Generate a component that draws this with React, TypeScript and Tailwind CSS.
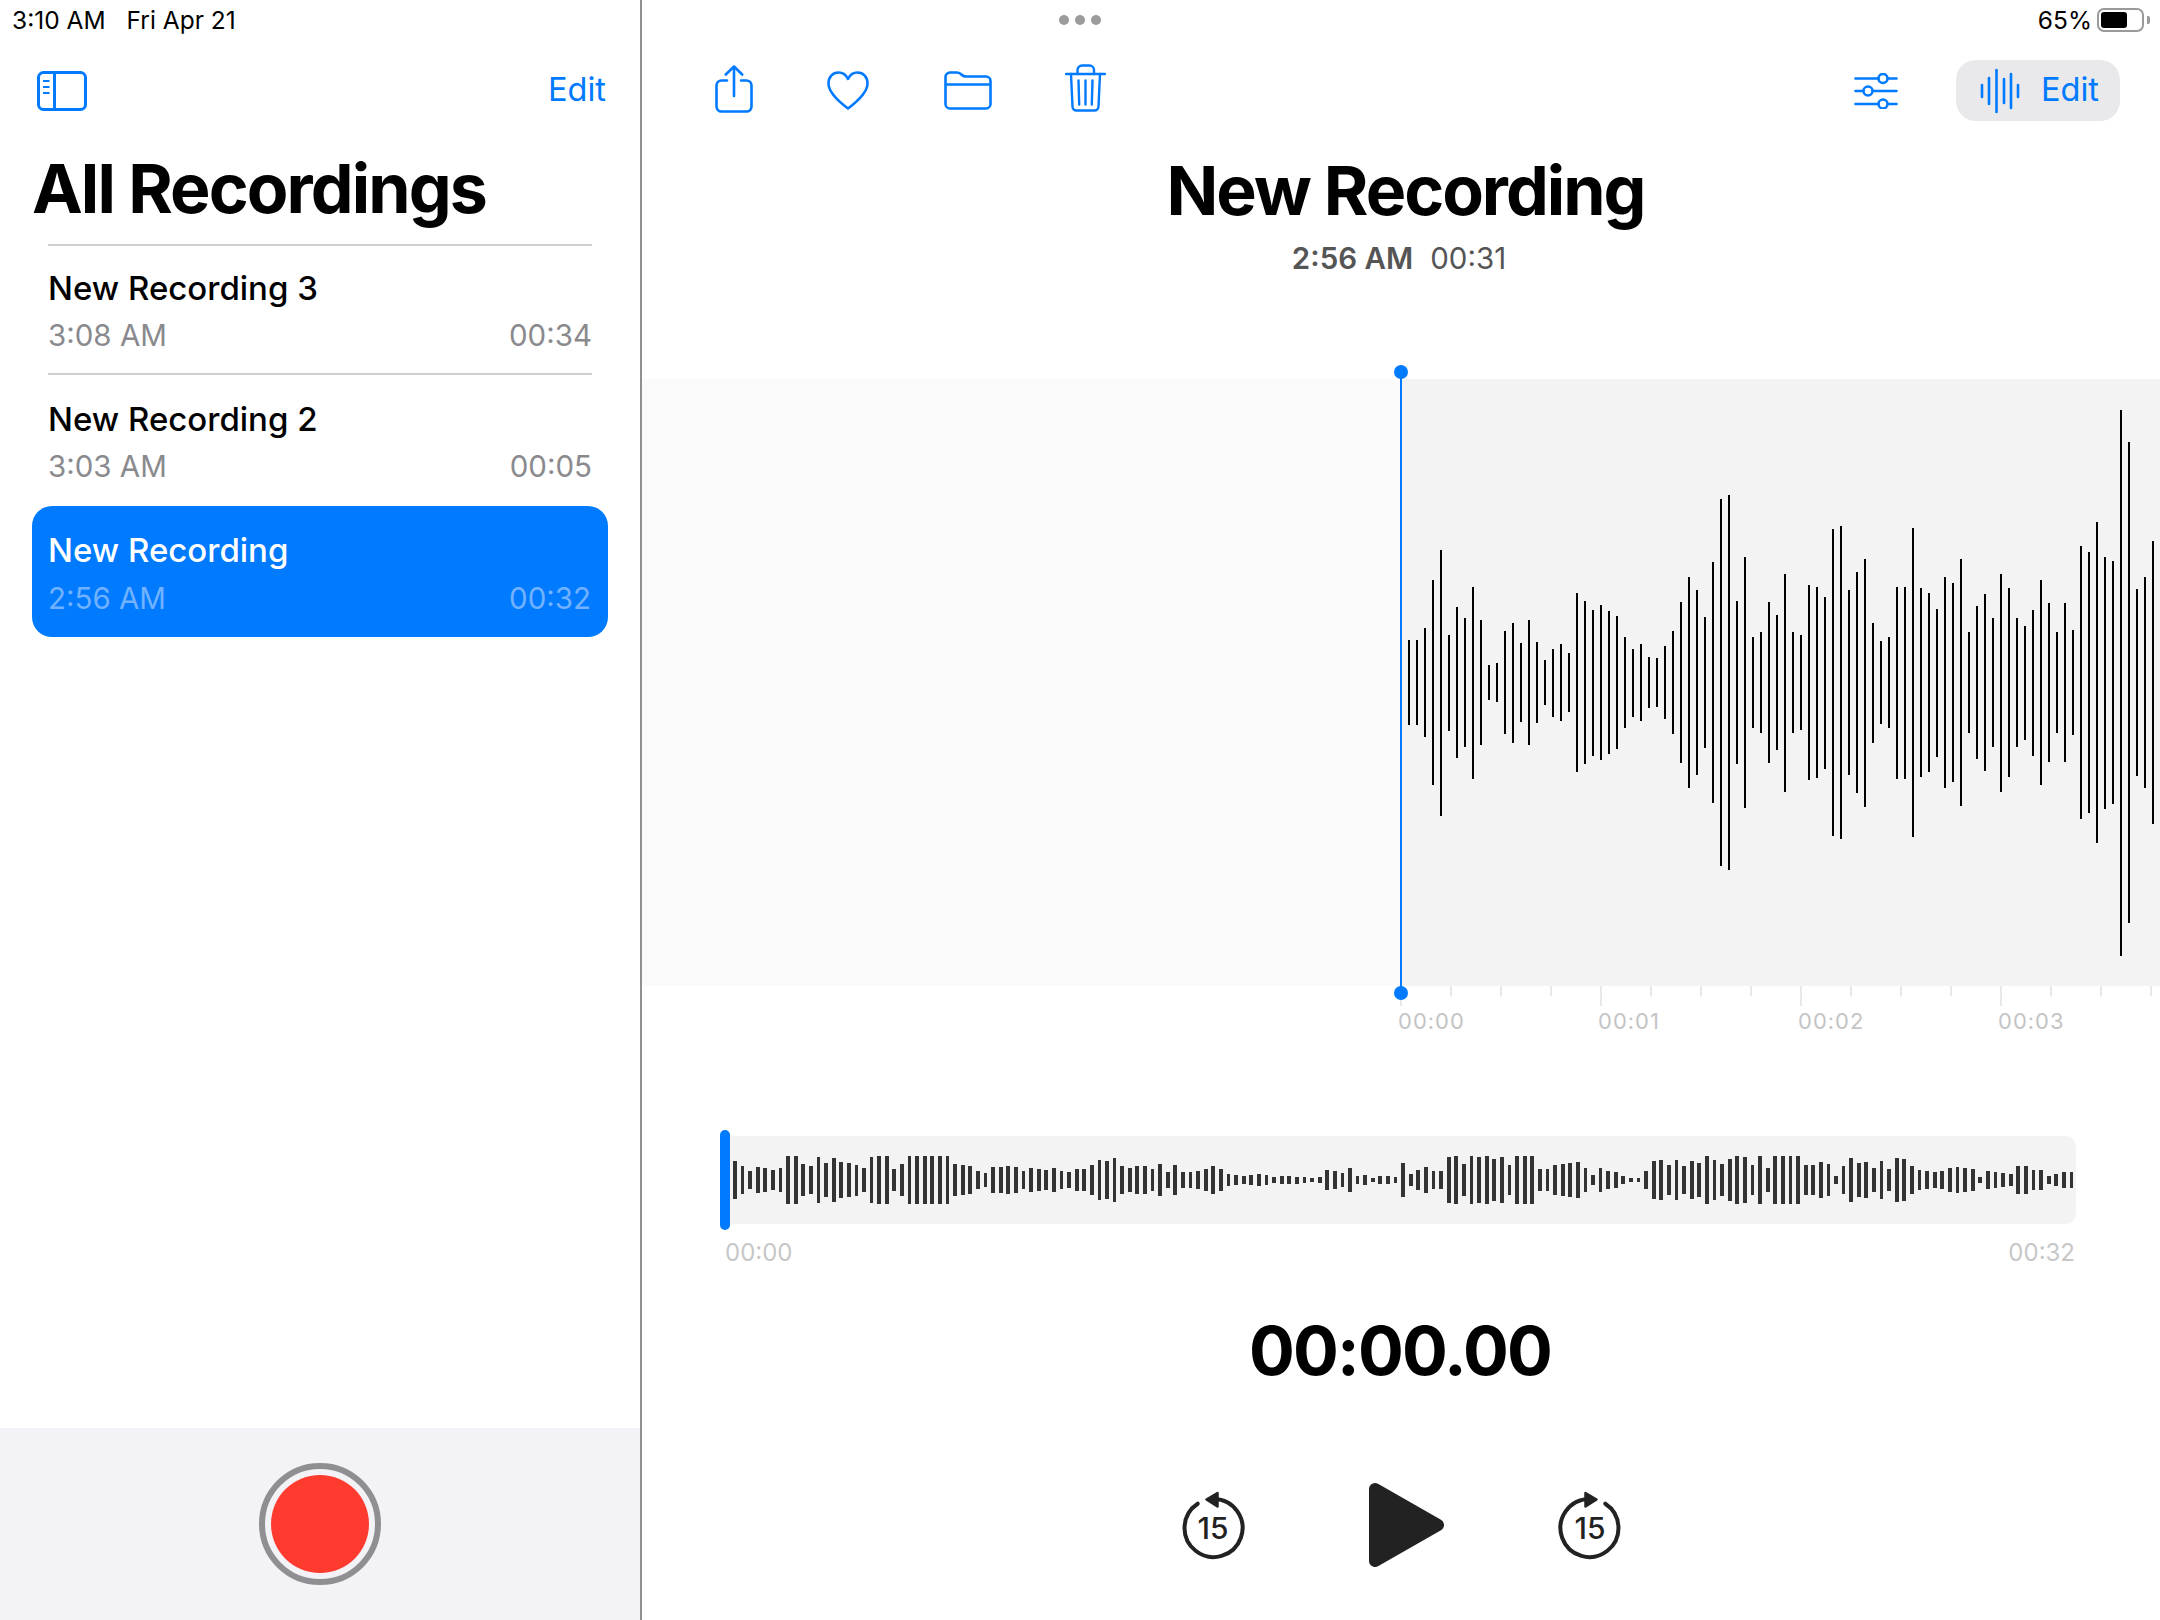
const BLUE = '#007aff';

const recordings = [
  { name: 'New Recording 3', time: '3:08 AM', length: '00:34', selected: false },
  { name: 'New Recording 2', time: '3:03 AM', length: '00:05', selected: false },
  { name: 'New Recording', time: '2:56 AM', length: '00:32', selected: true },
];

// bar heights in px, read off the reference
const bigWave = [
  85, 85, 109, 205, 266, 96, 151, 129, 192, 125, 35, 39, 103, 120, 79, 125, 81, 45, 68, 77, 59, 179, 163, 146, 155, 143, 133,
  91, 68, 77, 51, 49, 73, 103, 161, 211, 185, 131, 241, 367, 375, 163, 251, 91, 101, 161, 135, 218, 101, 95, 195, 191, 172,
  307, 313, 185, 221, 248, 120, 83, 91, 192, 192, 309, 189, 179, 148, 211, 199, 247, 101, 153, 177, 129, 218, 189, 129, 114,
  146, 205, 159, 101, 159, 105, 273, 261, 321, 252, 243, 546, 481, 187, 211, 283,
];

const miniWave = [
  38, 28, 18, 26, 24, 20, 24, 48, 48, 32, 28, 46, 34, 44, 36, 34, 31, 24, 46, 48, 48, 22, 32, 48, 48, 48, 48, 48, 48, 32,
  30, 28, 18, 14, 26, 26, 28, 26, 18, 24, 22, 20, 24, 18, 16, 22, 22, 30, 40, 38, 44, 28, 24, 28, 28, 22, 32, 16, 30, 16,
  16, 18, 22, 28, 22, 12, 10, 8, 10, 12, 10, 6, 8, 8, 7, 6, 4, 6, 20, 18, 14, 24, 8, 10, 4, 8, 8, 6, 34, 12, 20, 26, 18,
  18, 46, 48, 32, 48, 46, 48, 42, 46, 30, 48, 48, 48, 22, 22, 30, 32, 34, 36, 24, 10, 24, 18, 16, 8, 4, 4, 18, 38, 40, 30,
  40, 28, 38, 34, 48, 40, 32, 42, 48, 46, 30, 48, 24, 48, 48, 48, 48, 30, 30, 36, 32, 8, 28, 44, 34, 36, 24, 38, 22, 44,
  42, 28, 20, 18, 16, 18, 24, 26, 24, 22, 6, 18, 16, 14, 12, 28, 28, 20, 20, 8, 12, 16, 16,
];

const ticks = Array.from({ length: 16 }, (_, i) => i);

function SidebarIcon() {
  return (
    <svg width="50" height="40" viewBox="0 0 50 40" fill="none" stroke={BLUE} strokeWidth="3">
      <rect x="1.5" y="1.5" width="47" height="37" rx="5" />
      <path d="M17.5 1.5V38.5" />
      <path d="M6 10H12.5M6 16H12.5M6 22H12.5" strokeWidth="2" />
    </svg>
  );
}

function ShareIcon() {
  return (
    <svg width="38" height="48" viewBox="0 0 38 48" fill="none" stroke={BLUE} strokeWidth="2.6" strokeLinecap="round" strokeLinejoin="round">
      <path d="M12 15.5H6.5a5 5 0 0 0-5 5V41.500a5 5 0 0 0 5 5H31.500a5 5 0 0 0 5-5V20.500a5 5 0 0 0-5-5H26" />
      <path d="M19 2V31" />
      <path d="M10.800 9.500L19 1.500L27.200 9.500" />
    </svg>
  );
}

function HeartIcon() {
  return (
    <svg width="42" height="39" viewBox="0 0 42 39" fill="none" stroke={BLUE} strokeWidth="2.6" strokeLinejoin="round">
      <path d="M21 8C19 3.500 15.500 1.500 11.500 1.500C5.500 1.500 1.500 6 1.500 12.500C1.500 21 11 30 21 37.500C31 30 40.500 21 40.500 12.500C40.500 6 36.500 1.500 30.500 1.500C26.500 1.500 23 3.500 21 8Z" />
    </svg>
  );
}

function FolderIcon() {
  return (
    <svg width="48" height="39" viewBox="0 0 48 39" fill="none" stroke={BLUE} strokeWidth="2.6" strokeLinejoin="round">
      <path d="M1.500 13V6a4.500 4.500 0 0 1 4.500-4.500H13c2.500 0 3.500 1 5 2.500c1 1 2 1.500 4 1.500H42a4.500 4.500 0 0 1 4.500 4.500V33a4.500 4.500 0 0 1-4.500 4.500H6a4.500 4.500 0 0 1-4.500-4.500Z" />
      <path d="M1.500 13.500H46.500" />
    </svg>
  );
}

function TrashIcon() {
  return (
    <svg width="41" height="48" viewBox="0 0 41 48" fill="none" stroke={BLUE} strokeWidth="2.4" strokeLinecap="round" strokeLinejoin="round">
      <path d="M1 10H40" />
      <path d="M12.500 10V6a4.500 4.500 0 0 1 4.500-4.500H24.500a4.500 4.500 0 0 1 4.500 4.500V10" />
      <path d="M6 10L7.500 42.500a4 4 0 0 0 4 4H29.500a4 4 0 0 0 4-4L35 10" />
      <path d="M13.500 16.500L14.200 40.500M20.500 16.500V40.500M27.500 16.500L26.800 40.500" />
    </svg>
  );
}

function SlidersIcon() {
  return (
    <svg width="44" height="36" viewBox="0 0 44 36" fill="none" stroke={BLUE} strokeWidth="2.6" strokeLinecap="round">
      <path d="M1.500 5.500H24M34 5.500H42.500M1.500 18H9M19 18H42.500M1.500 31H24M34 31H42.500" />
      <circle cx="29" cy="5.500" r="4.500" />
      <circle cx="14" cy="18" r="4.500" />
      <circle cx="29" cy="31" r="4.500" />
    </svg>
  );
}

function WaveIcon() {
  return (
    <svg width="40" height="46" viewBox="0 0 40 46" fill="none" stroke={BLUE} strokeWidth="2.600" strokeLinecap="round">
      <path d="M2 17V29M9 10V36M16.500 2V44M24 11V35M31 6V40M38 17V29" />
    </svg>
  );
}

function BatteryIcon() {
  return (
    <div className="flex items-center">
      <div className="flex h-[24px] w-[47px] items-center rounded-[7px] border-2 border-[#9a9a9a] pl-[2px]">
        <div className="h-[16px] w-[26px] rounded-[3px] bg-black" />
      </div>
      <div className="ml-[3px] h-[8px] w-[3px] rounded-r-[2px] bg-[#9a9a9a]" />
    </div>
  );
}

function SkipIcon({ forward }: { forward?: boolean }) {
  return (
    <svg width="64" height="72" viewBox="0 0 64 72" fill="none">
      <g transform={forward ? 'matrix(-1 0 0 1 64 0)' : undefined}>
        <path d="M16.700 14.700A29 29 0 1 0 33 10" stroke="#222222" strokeWidth="4" strokeLinecap="round" />
        <path d="M25.500 10.500L36.500 4V17.500Z" fill="#222222" stroke="#222222" strokeWidth="2.500" strokeLinejoin="round" />
      </g>
      <text x="32" y="50" textAnchor="middle" fontFamily="Inter, sans-serif" fontSize="30" fontWeight="500" fill="#222222">
        15
      </text>
    </svg>
  );
}

function PlayIcon() {
  return (
    <svg width="75" height="84" viewBox="0 0 75 84" fill="#222222" stroke="#222222" strokeWidth="12" strokeLinejoin="round">
      <path d="M6 6L69 42L6 78Z" />
    </svg>
  );
}

function RecordingRow({ name, time, length, selected, first }: (typeof recordings)[number] & { first?: boolean }) {
  const box = selected
    ? 'mx-[32px] h-[131px] rounded-[20px] bg-[#007aff] pt-[22px] pr-[17px] pl-[16px]'
    : first
      ? 'mx-[48px] h-[127px] pt-[20px]'
      : 'mx-[48px] h-[131px] pt-[22px]';
  return (
    <div className={box}>
      <div className={selected ? 'text-[33px] leading-[44px] font-medium text-white' : 'text-[33px] leading-[44px] font-medium text-black'}>{name}</div>
      <div className={selected ? 'mt-[4px] flex justify-between text-[29.500px] leading-[44px] text-[#70b2ff]' : 'mt-[3px] flex justify-between text-[29.500px] leading-[44px] text-[#8a8a8e]'}>
        <span>{time}</span>
        <span>{length}</span>
      </div>
    </div>
  );
}

function Sidebar() {
  return (
    <aside className="flex h-[1620px] w-[642px] shrink-0 flex-col border-r-2 border-[#909094]">
      <div className="flex h-[40px] items-center pl-[12px] text-[24.500px] text-black">
        <span>3:10 AM</span>
        <span className="ml-[21px]">Fri Apr 21</span>
      </div>
      <div className="mt-[20px] flex h-[61px] items-center justify-between pr-[34px] pl-[37px]">
        <SidebarIcon />
        <span className="text-[32.500px] text-[#007aff]">Edit</span>
      </div>
      <h1 className="mt-[26px] h-[97px] pl-[32px] text-[68px] leading-[82px] font-bold tracking-[-1.900px] text-black">All Recordings</h1>
      <div className="mx-[48px] h-[2px] bg-[#d0d0d2]" />
      <RecordingRow {...recordings[0]} first />
      <div className="mx-[48px] h-[2px] bg-[#d0d0d2]" />
      <RecordingRow {...recordings[1]} />
      <RecordingRow {...recordings[2]} />
      <div className="mt-auto flex h-[192px] items-center justify-center bg-[#f2f2f7]">
        <div className="flex h-[122px] w-[122px] items-center justify-center rounded-full border-[6px] border-[#8e8e93]">
          <div className="h-[98px] w-[98px] rounded-full bg-[#ff3b30]" />
        </div>
      </div>
    </aside>
  );
}

function BigWaveform() {
  return (
    <div className="relative mt-[99px]">
      <div className="flex h-[607px] overflow-hidden">
        <div className="w-[759px] shrink-0 bg-[#fafafa]" />
        <div className="flex flex-1 items-center gap-[6px] bg-[#f3f3f3] pl-[7px]">
          {bigWave.map((h, i) => (
            <div key={i} className="w-[2px] shrink-0 bg-black" style={{ height: h }} />
          ))}
        </div>
      </div>
      {/* playhead sits over the wave */}
      <div className="absolute -top-[14px] left-[752px] h-[635px] w-[14px]">
        <div className="absolute top-0 left-0 h-[14px] w-[14px] rounded-full bg-[#007aff]" />
        <div className="absolute top-[4px] left-[6px] h-[618px] w-[2px] bg-[#007aff]" />
        <div className="absolute top-[621px] left-0 h-[14px] w-[14px] rounded-full bg-[#007aff]" />
      </div>
      <div className="ml-[758px] flex h-[22px] gap-[48px]">
        {ticks.map((i) => (
          <div key={i} className={i % 4 === 0 ? 'h-[20px] w-[2px] shrink-0 bg-[#e8e8e8]' : 'h-[10px] w-[2px] shrink-0 bg-[#e8e8e8]'} />
        ))}
      </div>
      <div className="ml-[756px] flex h-[26px] text-[22px] leading-[26px] tracking-[1px] text-[#c4c4c4]">
        <span className="w-[200px] shrink-0">00:00</span>
        <span className="w-[200px] shrink-0">00:01</span>
        <span className="w-[200px] shrink-0">00:02</span>
        <span className="w-[200px] shrink-0">00:03</span>
      </div>
    </div>
  );
}

function MiniWaveform() {
  return (
    <div className="mt-[102px] pr-[84px] pl-[78px]">
      <div className="relative">
        <div className="flex h-[88px] items-center justify-between rounded-[10px] bg-[#f3f3f3] pl-[13px]">
          {miniWave.map((h, i) => (
            <div key={i} className="w-[3.800px] shrink-0 bg-[#333333]" style={{ height: h }} />
          ))}
        </div>
        <div className="absolute -top-[6px] left-0 h-[100px] w-[10px] rounded-full bg-[#007aff]" />
      </div>
      <div className="mt-[13px] flex justify-between pr-[1px] pl-[5px] text-[24px] leading-[32px] text-[#c7c7c7]">
        <span>00:00</span>
        <span>00:32</span>
      </div>
    </div>
  );
}

function Detail() {
  return (
    <main className="flex h-[1620px] min-w-0 flex-1 flex-col overflow-hidden">
      <div className="flex h-[40px] items-center pr-[10px]">
        <div className="ml-[417px] flex gap-[6px]">
          <div className="h-[10px] w-[10px] rounded-full bg-[#9b9b9b]" />
          <div className="h-[10px] w-[10px] rounded-full bg-[#9b9b9b]" />
          <div className="h-[10px] w-[10px] rounded-full bg-[#9b9b9b]" />
        </div>
        <div className="ml-auto flex items-center gap-[5px]">
          <span className="text-[24.500px] text-black">65%</span>
          <BatteryIcon />
        </div>
      </div>
      <div className="mt-[20px] flex h-[61px] items-center pr-[40px] pl-[73px]">
        <div className="-mt-[3px]">
          <ShareIcon />
        </div>
        <div className="ml-[74px]">
          <HeartIcon />
        </div>
        <div className="ml-[75px]">
          <FolderIcon />
        </div>
        <div className="-mt-[5px] ml-[73px]">
          <TrashIcon />
        </div>
        <div className="ml-auto">
          <SlidersIcon />
        </div>
        <div className="ml-[58px] flex h-[61px] w-[164px] items-center rounded-[20px] bg-[#e9e9eb] pl-[24px]">
          <WaveIcon />
          <span className="ml-[21px] text-[32.500px] text-[#007aff]">Edit</span>
        </div>
      </div>
      <h2 className="mt-[28px] pl-[9px] text-center text-[68px] leading-[82px] font-bold tracking-[-2px] text-black">New Recording</h2>
      <div className="mt-[5px] flex h-[44px] items-center justify-center gap-[17px] pr-[4px] text-[29.500px] text-[#555555]">
        <span className="font-semibold">2:56 AM</span>
        <span>00:31</span>
      </div>
      <BigWaveform />
      <MiniWaveform />
      <div className="mt-[40px] pr-[2px] text-center text-[68px] leading-[82px] font-bold tracking-[-1.800px] text-black">00:00.00</div>
      <div className="mt-[92px] flex items-center justify-center">
        <SkipIcon />
        <div className="mr-[114px] ml-[124px]">
          <PlayIcon />
        </div>
        <SkipIcon forward />
      </div>
    </main>
  );
}

export default function App() {
  return (
    <div className="flex h-[1620px] w-[2160px] overflow-hidden bg-white font-['Inter',sans-serif]">
      <Sidebar />
      <Detail />
    </div>
  );
}
